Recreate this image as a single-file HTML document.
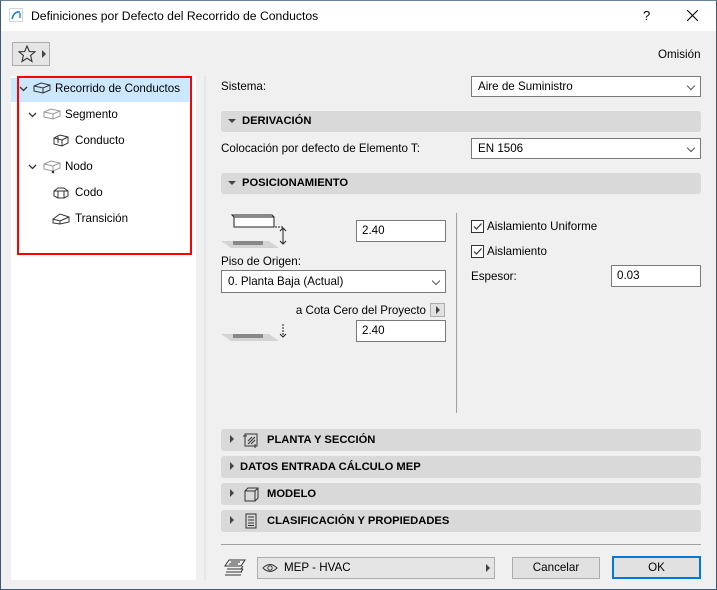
<!DOCTYPE html>
<html><head><meta charset="utf-8"><style>
*{box-sizing:border-box;margin:0;padding:0}
body{width:717px;height:590px;background:#f0f0f0;font-family:"Liberation Sans",sans-serif;font-size:11.6px;color:#000;position:relative;overflow:hidden}
.a{position:absolute}
.win{left:0;top:0;width:717px;height:590px;border:1px solid #3b5a7a;border-top-color:#6b7f95}
.title{left:1px;top:1px;width:715px;height:30px;background:#fff}
.bar{background:#d9d9d9;border-radius:3px;height:21px;left:221px;width:480px;font-weight:bold;font-size:11.2px;line-height:21px}
.dd{background:#fff;border:1px solid #7a7a7a;height:21px;line-height:19px;padding-left:6px}
.inp{background:#fff;border:1px solid #7a7a7a;height:22px;line-height:20px;padding-left:5px}
.chev{position:absolute;right:6px;top:6px;width:6px;height:6px;border-right:1px solid #555;border-bottom:1px solid #555;transform:rotate(45deg)}
.tri{display:inline-block;width:0;height:0;border-left:4px solid #444;border-top:4px solid transparent;border-bottom:4px solid transparent}
.trd{display:inline-block;width:0;height:0;border-top:4px solid #444;border-left:4px solid transparent;border-right:4px solid transparent}
.tree div{position:absolute;font-size:11.6px}
.cb{width:13px;height:13px;border:1px solid #333;background:#fff}
.btn{background:#e1e1e1;border:1px solid #adadad;height:22px;text-align:center;line-height:20px}
</style></head><body>
<div class="a win"></div>
<div class="a title"></div>
<svg class="a" style="left:9px;top:8px" width="14" height="14"><rect x="0.5" y="0.5" width="13" height="13" fill="#fff" stroke="#cfd8e0"/><path d="M3 11 Q5 3 11 4" stroke="#1a7fc8" stroke-width="1.6" fill="none"/><path d="M11 5 v5" stroke="#1a7fc8" stroke-width="1.4"/></svg>
<div class="a" style="left:31px;top:9px;font-size:12.2px">Definiciones por Defecto del Recorrido de Conductos</div>
<div class="a" style="left:643px;top:8px;font-size:13px">?</div>
<svg class="a" style="left:687px;top:10px" width="11" height="11"><path d="M0 0L11 11M11 0L0 11" stroke="#000" stroke-width="1.1"/></svg>

<div class="a" style="left:12px;top:42px;width:38px;height:24px;border:1px solid #adadad;background:#e5e5e5"></div>
<svg class="a" style="left:18px;top:45px" width="18" height="18"><path d="M9 1 L11.3 6.5 L17 6.8 L12.6 10.5 L14 16.5 L9 13.2 L4 16.5 L5.4 10.5 L1 6.8 L6.7 6.5Z" fill="none" stroke="#333" stroke-width="1.1"/></svg>
<div class="a tri" style="left:42px;top:50px"></div>
<div class="a" style="left:658px;top:48px">Omisión</div>

<div class="a" style="left:11px;top:76px;width:185px;height:504px;background:#fff"></div>
<div class="a" style="left:11px;top:78px;width:181px;height:24px;background:#cce8ff"></div>
<div class="a" style="left:17px;top:76px;width:175px;height:179px;border:2px solid #f00"></div>
<div class="tree">
<svg class="a" style="left:19px;top:86px" width="9" height="6"><path d="M1 1 L4.5 4.5 L8 1" fill="none" stroke="#333" stroke-width="1.3"/></svg>
<svg class="a" style="left:33px;top:81px" width="18" height="14"><path d="M1 5 L8 2 L17 4 L17 9 L10 12 L1 10Z M1 5 L10 7 L17 4 M10 7 L10 12" fill="none" stroke="#333"/></svg>
<div style="left:55px;top:82px">Recorrido de Conductos</div>
<svg class="a" style="left:28px;top:112px" width="9" height="6"><path d="M1 1 L4.5 4.5 L8 1" fill="none" stroke="#333" stroke-width="1.3"/></svg>
<svg class="a" style="left:43px;top:108px" width="18" height="13"><path d="M1 4 L8 1 L17 3 L17 8 L10 11 L1 9Z M1 4 L10 6 L17 3 M10 6 L10 11" fill="none" stroke="#999"/></svg>
<div style="left:65px;top:108px">Segmento</div>
<svg class="a" style="left:53px;top:134px" width="16" height="14"><path d="M1 4 L7 1 L15 3 L15 9 L9 12 L1 10Z M1 4 L9 6 L15 3 M9 6 L9 12 M5 3 L5 9" fill="none" stroke="#333"/></svg>
<div style="left:75px;top:134px">Conducto</div>
<svg class="a" style="left:28px;top:164px" width="9" height="6"><path d="M1 1 L4.5 4.5 L8 1" fill="none" stroke="#333" stroke-width="1.3"/></svg>
<svg class="a" style="left:43px;top:160px" width="18" height="15"><path d="M1 4 L8 1 L17 3 L17 8 L10 11 L1 9Z M1 4 L10 6 L17 3 M10 6 L10 11" fill="none" stroke="#999"/><circle cx="10" cy="12" r="1.3" fill="#333"/></svg>
<div style="left:65px;top:160px">Nodo</div>
<svg class="a" style="left:53px;top:186px" width="16" height="14"><path d="M1 5 L5 2 L11 2 L15 5 L15 10 L11 12 L5 12 L1 10Z M1 5 L15 5 M5 5 L5 12 M11 5 L11 12" fill="none" stroke="#333"/></svg>
<div style="left:75px;top:186px">Codo</div>
<svg class="a" style="left:52px;top:212px" width="18" height="14"><path d="M1 7 L8 2 L17 5 L17 10 L8 12 L1 11Z M1 7 L8 9 L17 5 M8 9 L8 12" fill="none" stroke="#333"/></svg>
<div style="left:75px;top:212px">Transición</div>
</div>
<div class="a" style="left:204px;top:76px;width:2px;height:504px;background:#e6e6e6"></div>

<div class="a" style="left:221px;top:80px">Sistema:</div>
<div class="a dd" style="left:471px;top:76px;width:230px">Aire de Suministro<span class="chev"></span></div>
<div class="a bar" style="top:111px"><span class="trd" style="margin:0 6px 1px 7px"></span>DERIVACIÓN</div>
<div class="a" style="left:221px;top:142px">Colocación por defecto de Elemento T:</div>
<div class="a dd" style="left:471px;top:138px;width:230px">EN 1506<span class="chev"></span></div>
<div class="a bar" style="top:173px"><span class="trd" style="margin:0 6px 1px 7px"></span>POSICIONAMIENTO</div>

<svg class="a" style="left:221px;top:213px" width="70" height="37"><rect x="13" y="4" width="40" height="10" fill="#fff" stroke="#222"/><path d="M13 4 l-2 -2 h40 l2 2" fill="none" stroke="#222"/><path d="M15 14 h48" stroke="#222" stroke-dasharray="2,1"/><path d="M0 28 l10 7 h48 l-10 -7z" fill="#d4d4d4"/><rect x="12" y="28" width="30" height="4" fill="#888"/><path d="M62 15 v16 M59 18 l3 -3 3 3 M59 28 l3 3 3 -3" fill="none" stroke="#222"/></svg>
<div class="a inp" style="left:356px;top:220px;width:90px">2.40</div>
<div class="a" style="left:221px;top:255px">Piso de Origen:</div>
<div class="a dd" style="left:221px;top:270px;width:225px;height:23px;line-height:21px">0. Planta Baja (Actual)<span class="chev" style="top:7px"></span></div>
<div class="a" style="right:291px;top:304px">a Cota Cero del Proyecto</div>
<div class="a" style="left:430px;top:303px;width:15px;height:14px;background:#e1e1e1;border:1px solid #adadad"></div>
<div class="a tri" style="left:436px;top:306px"></div>
<svg class="a" style="left:221px;top:322px" width="70" height="25"><path d="M0 12 l10 7 h48 l-10 -7z" fill="#d4d4d4"/><rect x="12" y="12" width="30" height="4" fill="#888"/><path d="M62 2 v13" stroke="#222" stroke-dasharray="2,1"/><path d="M59 12 l3 3 3 -3" fill="none" stroke="#222"/></svg>
<div class="a inp" style="left:356px;top:320px;width:90px">2.40</div>
<div class="a" style="left:456px;top:213px;width:1px;height:200px;background:#a0a0a0"></div>

<div class="a cb" style="left:471px;top:220px"></div>
<svg class="a" style="left:472px;top:221px" width="11" height="11"><path d="M2 5.5 L4.5 8 L9.5 2.5" fill="none" stroke="#333" stroke-width="1.2"/></svg>
<div class="a" style="left:487px;top:220px">Aislamiento Uniforme</div>
<div class="a cb" style="left:471px;top:245px"></div>
<svg class="a" style="left:472px;top:246px" width="11" height="11"><path d="M2 5.5 L4.5 8 L9.5 2.5" fill="none" stroke="#333" stroke-width="1.2"/></svg>
<div class="a" style="left:487px;top:245px">Aislamiento</div>
<div class="a" style="left:471px;top:270px">Espesor:</div>
<div class="a inp" style="left:611px;top:265px;width:90px">0.03</div>

<div class="a bar" style="top:429px;height:22px;line-height:22px"><span class="tri" style="margin:0 0 0 9px"></span>
<svg style="position:absolute;left:22px;top:3px" width="16" height="16"><rect x="2" y="2" width="12" height="12" fill="none" stroke="#333"/><path d="M5 12 L12 5 M8 12 L12 8 M5 9 L9 5" stroke="#333"/><path d="M0 4 h4 M12 16 v-4" stroke="#333"/></svg><span style="position:absolute;left:46px">PLANTA Y SECCIÓN</span></div>
<div class="a bar" style="top:456px;height:22px;line-height:22px"><span class="tri" style="margin:0 6px 0 9px"></span>DATOS ENTRADA CÁLCULO MEP</div>
<div class="a bar" style="top:483px;height:22px;line-height:22px"><span class="tri" style="margin:0 0 0 9px"></span>
<svg style="position:absolute;left:22px;top:3px" width="16" height="16"><path d="M2 5 h10 v10 h-10z M2 5 l3 -3 h10 v10 l-3 3 M12 5 l3 -3" fill="none" stroke="#333"/></svg><span style="position:absolute;left:46px">MODELO</span></div>
<div class="a bar" style="top:510px;height:22px;line-height:22px"><span class="tri" style="margin:0 0 0 9px"></span>
<svg style="position:absolute;left:22px;top:3px" width="16" height="16"><rect x="3" y="1" width="10" height="14" fill="none" stroke="#333"/><path d="M5 4 h6 M5 7 h6 M5 10 h6 M5 12.5 h6" stroke="#333"/></svg><span style="position:absolute;left:46px">CLASIFICACIÓN Y PROPIEDADES</span></div>

<div class="a" style="left:221px;top:544px;width:480px;height:1px;background:#a0a0a0"></div>
<svg class="a" style="left:224px;top:558px" width="24" height="18"><path d="M5 2 h16 l-4 6 h-16z M3 11 h16 M2 14 h16 M1 17 h16 M19 8 l-2 3 M19 11 l-2 3" fill="none" stroke="#333"/><path d="M7 4 h9 M5 6 h9" stroke="#333"/></svg>
<div class="a" style="left:257px;top:557px;width:238px;height:22px;background:#e5e5e5;border:1px solid #adadad;line-height:20px;padding-left:26px">MEP - HVAC</div>
<svg class="a" style="left:262px;top:563px" width="16" height="10"><path d="M1 5 Q8 -2 15 5 Q8 12 1 5Z" fill="none" stroke="#333"/><circle cx="8" cy="5" r="2.2" fill="none" stroke="#333"/></svg>
<div class="a tri" style="left:486px;top:564px"></div>
<div class="a btn" style="left:512px;top:557px;width:88px">Cancelar</div>
<div class="a btn" style="left:612px;top:556px;width:89px;height:23px;border:2px solid #0078d7;line-height:19px">OK</div>
</body></html>
